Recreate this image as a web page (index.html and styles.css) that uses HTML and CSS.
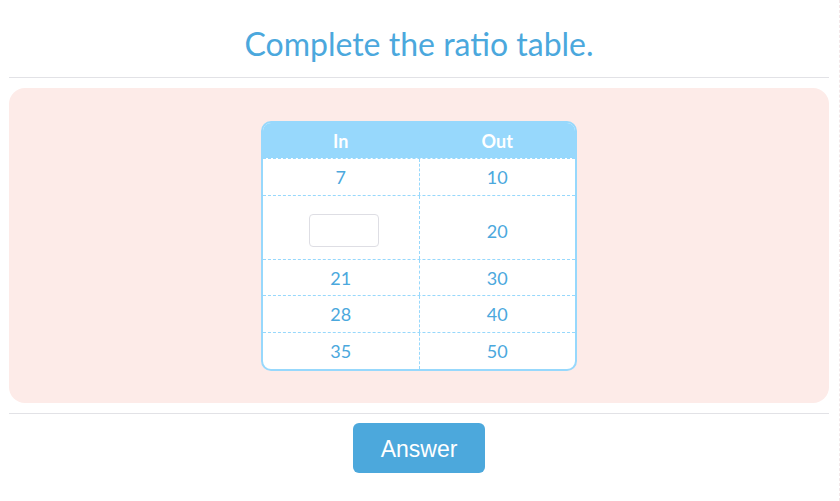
FILE: index.html
```html
<!DOCTYPE html>
<html>
<head>
<meta charset="utf-8">
<link rel="stylesheet" href="styles.css">
</head>
<body>
<div class="page">
  <h1 class="title">Complete the ratio table.</h1>
  <div class="panel">
    <div class="table">
      <div class="row head"><div class="cell">In</div><div class="cell">Out</div></div>
      <div class="row r37"><div class="cell">7</div><div class="cell">10</div></div>
      <div class="row tall"><div class="cell"><input class="box" type="text"></div><div class="cell low">20</div></div>
      <div class="row r36"><div class="cell">21</div><div class="cell">30</div></div>
      <div class="row r37"><div class="cell">28</div><div class="cell">40</div></div>
      <div class="row last"><div class="cell">35</div><div class="cell">50</div></div>
    </div>
  </div>
  <div class="footer">
    <button class="answer">Answer</button>
  </div>
</div>
</body>
</html>
```
FILE: styles.css
```css
html, body { margin: 0; padding: 0; background: #fff; }
body { width: 840px; height: 501px; overflow: hidden; border-right: 1px dashed #f3e6e8; box-sizing: border-box; }
.page { width: 820px; margin-left: 9px; font-family: "Lato", "Noto Sans", sans-serif; }
.title {
  margin: 0;
  height: 78px;
  box-sizing: border-box;
  padding-top: 24px;
  text-align: center;
  font-weight: 400;
  font-size: 32px;
  line-height: 40px;
  color: #4ba8dd;
  border-bottom: 1px solid #e2e2e6;
}
.panel {
  margin-top: 10px;
  height: 315px;
  background: #fdebe8;
  border-radius: 16px;
  display: flex;
  justify-content: center;
  padding-top: 33px;
  box-sizing: border-box;
}
.table {
  width: 316px;
  height: 250px;
  box-sizing: border-box;
  border: 2px solid #97d8fc;
  border-radius: 10px;
  overflow: hidden;
  background: #fff;
  display: flex;
  flex-direction: column;
}
.row { display: flex; box-sizing: border-box; border-top: 1px dashed #97d8fc; }
.row.head { height: 35px; border-top: none; background: #97d8fc; color: #fff; font-weight: 700; }
.row.r37 { height: 37px; }
.row.r36 { height: 36px; }
.row.tall { height: 64px; }
.row.last { flex: 1; }
.cell {
  flex: 1;
  display: flex;
  align-items: center;
  justify-content: center;
  font-size: 18px;
  color: #4ba8dd;
}
.cell.low { padding-top: 6px; }
.head .cell { color: #fff; }
.cell + .cell { border-left: 1px dashed #97d8fc; }
.box {
  width: 70px;
  height: 33px;
  box-sizing: border-box;
  border: 1px solid #dedee4;
  border-radius: 4px;
  margin-left: 6px;
  margin-top: 5px;
  background: #fff;
  outline: none;
}
.footer {
  margin-top: 10px;
  border-top: 1px solid #e2e2e6;
  display: flex;
  justify-content: center;
  padding-top: 9px;
}
.answer {
  width: 132px;
  height: 50px;
  border: none;
  border-radius: 6px;
  background: #4ca8dc;
  color: #fff;
  font-family: "Liberation Sans", Arial, sans-serif;
  font-size: 23px;
  padding: 3px 0 0;
}
```
